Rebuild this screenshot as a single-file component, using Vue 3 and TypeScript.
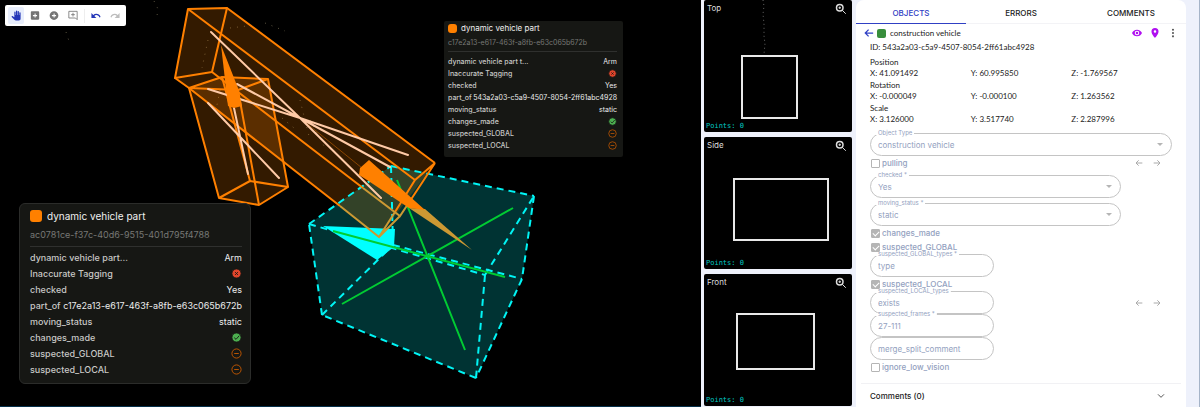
<script setup lang="ts">
import { ref } from 'vue'

type Mark = 'bad' | 'good' | 'none'
interface CardRow { name: string; value?: string; mark?: Mark }
interface Card { id: string; size: string; rows: CardRow[] }

const makeRows = (kind: string, partOf: string): CardRow[] => [
  { name: kind, value: 'Arm' },
  { name: 'Inaccurate Tagging', mark: 'bad' },
  { name: 'checked', value: 'Yes' },
  { name: 'part_of', value: partOf },
  { name: 'moving_status', value: 'static' },
  { name: 'changes_made', mark: 'good' },
  { name: 'suspected_GLOBAL', mark: 'none' },
  { name: 'suspected_LOCAL', mark: 'none' },
]

const cards: Card[] = [
  { id: 'c17e2a13-e617-463f-a8fb-e63c065b672b', size: 'small', rows: makeRows('dynamic vehicle part t...', '543a2a03-c5a9-4507-8054-2ff61abc4928') },
  { id: 'ac0781ce-f37c-40d6-9515-401d795f4788', size: 'large', rows: makeRows('dynamic vehicle part...', 'c17e2a13-e617-463f-a8fb-e63c065b672b') },
]

const views = [
  { name: 'Top', x: 38, y: 56, w: 55, h: 62 },
  { name: 'Side', x: 30, y: 42, w: 94, h: 61 },
  { name: 'Front', x: 33, y: 40, w: 77, h: 55 },
]

const tabs = ['OBJECTS', 'ERRORS', 'COMMENTS']
const active = ref('OBJECTS')

const transform = [
  { name: 'Position', values: ['X: 41.091492', 'Y: 60.995850', 'Z: -1.769567'] },
  { name: 'Rotation', values: ['X: -0.000049', 'Y: -0.000100', 'Z: 1.263562'] },
  { name: 'Scale', values: ['X: 3.126000', 'Y: 3.517740', 'Z: 2.287996'] },
]
</script>

<template>
  <div class="app">
    <main class="scene">
      <svg class="world" viewBox="0 0 701 407" preserveAspectRatio="xMinYMin meet" aria-hidden="true">
        <g class="dust">
          <path d="M154 1l4 8M157 14l2 5M66 32l4 12M208 40l-6 28M220 90l-5 25M230 28l25-3M265 23l20 8M300 100l10 40M310 120l14 26M282 118l12 10" />
        </g>
        <polygon class="cyan-fill" points="309,224 391,166 534,196 522,279 476,378 322,315" />
        <g class="orange-fill">
          <polygon points="188,9 227,8 435,163 379,237 175,78" />
          <polygon points="189,88 222,77 268,79 288,187 259,205 219,198" />
        </g>
        <g class="cyan-line">
          <path d="M309 224L391 166" /><path d="M391 166L534 196" /><path d="M534 196L522 279" />
          <path d="M522 279L476 378" /><path d="M476 378L322 315" /><path d="M322 315L309 224" />
          <path d="M309 224L485 275" /><path d="M393 245L522 279" /><path d="M391 166L393 245" />
          <path d="M322 315L393 245" /><path d="M485 275L534 196" /><path d="M485 275L476 378" />
        </g>
        <polygon class="cyan" points="323,226 395,229 394,247 377,260" />
        <path class="green-line" d="M342 304L513 208M465 350L397 180M333 231L505 277" />
        <g class="orange-line">
          <path d="M188 9L227 8L212 72L175 78Z" />
          <path d="M188 9L415 180M227 8L435 163M212 72L363 188M175 78L189 88L340 206" />
          <path d="M189 88L222 77L268 79L238 90ZM219 198L250 181L288 187L259 205Z" />
          <path d="M189 88L219 198M268 79L288 187M238 90L259 205M222 77L250 181" />
          <path d="M435 163L415 180L395 212M435 163L410 201" />
        </g>
        <path class="amber-line" d="M340 206L379 237L395 212M363 188L400 216L410 201M379 237L400 216" />
        <path class="thin-line" d="M300 118L362 168" />
        <g class="pink-line">
          <path d="M211 32L300 118L208 89M237 84L300 118M208 103L279 178M408 155L300 118L390 167M300 118L381 198M234 108L248 174" />
        </g>
        <polygon class="orange" points="221,45 238,88 242,106 234,108 228,106" />
        <polygon class="amber" points="409,208 472,250 425,209" />
        <polygon class="orange" points="369,160 360,168 359,175 367,180 409,208 425,210" />
      </svg>

      <div class="toolbar" role="toolbar" aria-label="Scene tools">
        <button class="tool selected" aria-label="Pan">
          <svg viewBox="0 0 24 24"><path d="M23 5.500V20c0 2.200-1.800 4-4 4h-7.300c-1.080 0-2.100-.43-2.850-1.190L1 14.830s1.260-1.230 1.300-1.250c.22-.19.49-.29.79-.29.22 0 .42.06.6.16L8 15.910V4c0-.83.67-1.500 1.500-1.500S11 3.170 11 4v7h1V1.500c0-.83.67-1.500 1.500-1.500S15 .67 15 1.500V11h1V2.500c0-.83.67-1.500 1.500-1.500s1.500.67 1.500 1.500V11h1V5.500c0-.83.67-1.500 1.500-1.500S23 4.670 23 5.500z" /></svg>
        </button>
        <button class="tool" aria-label="Add box">
          <svg viewBox="0 0 24 24"><path fill-rule="evenodd" d="M4 2h16a2 2 0 012 2v16a2 2 0 01-2 2H4a2 2 0 01-2-2V4a2 2 0 012-2zm7 5v4H7v2.500h4V17h2.500v-3.500H17V11h-3.500V7z" /></svg>
        </button>
        <button class="tool" aria-label="Add point">
          <svg viewBox="0 0 24 24"><path fill-rule="evenodd" d="M12 1.500a10.500 10.500 0 100 21 10.500 10.500 0 000-21zM11 7v4H7v2.500h4V17h2.500v-3.500H17V11h-3.500V7z" /></svg>
        </button>
        <button class="tool" aria-label="Add comment">
          <svg viewBox="0 0 24 24"><path class="stroke" d="M2 2h20v20l-4-4H2zM12 5.500v9M7.500 10h9" /></svg>
        </button>
        <span class="divider"></span>
        <button class="tool undo" aria-label="Undo">
          <svg viewBox="0 0 24 24"><path d="M12.500 8c-2.650 0-5.050.99-6.900 2.600L1 6v12h12l-5-5c1.300-1.200 2.700-2 4.500-2 3.540 0 6.550 2.310 7.600 5.500l2.900-.9C21.500 11 17.400 8 12.500 8z" /></svg>
        </button>
        <button class="tool redo" aria-label="Redo">
          <svg viewBox="0 0 24 24"><path d="M18.400 10.600C16.550 8.990 14.150 8 11.500 8 6.600 8 2.500 11 1 15.600l2.900.9c1.050-3.190 4.050-5.500 7.600-5.500 1.800 0 3.200.8 4.500 2l-5 5h12V6z" /></svg>
        </button>
      </div>

      <section v-for="card in cards" :key="card.id" class="card" :class="card.size">
        <h2><span class="swatch"></span>dynamic vehicle part</h2>
        <p class="card-id">{{ card.id }}</p>
        <dl>
          <div v-for="row in card.rows" :key="row.name">
            <dt>{{ row.name }}</dt>
            <dd>
              <template v-if="row.value">{{ row.value }}</template>
              <svg v-else viewBox="0 0 12 12" :class="row.mark">
                <circle cx="6" cy="6" r="5" />
                <path v-if="row.mark === 'bad'" d="M4.500 4.500l3 3M7.500 4.500l-3 3" />
                <path v-else-if="row.mark === 'good'" d="M3.500 6.200l2 1.800 3.500-4" />
                <path v-else d="M3.500 6h5" />
              </svg>
            </dd>
          </div>
        </dl>
      </section>
    </main>

    <div class="views">
      <section v-for="view in views" :key="view.name" class="view">
        <svg class="outline" viewBox="0 0 148 132" aria-hidden="true">
          <path v-if="view.name === 'Top'" class="trail" d="M59 0l1 6-1 8 1 10 0 12 1 8-1 10" />
          <rect :x="view.x" :y="view.y" :width="view.w" :height="view.h" />
        </svg>
        <header>
          <h3>{{ view.name }}</h3>
          <button :aria-label="`Zoom ${view.name}`">
            <svg viewBox="0 0 24 24"><circle cx="9.500" cy="9.500" r="6.500" /><path d="M14.500 14.500l7 7M9.500 7v5M7 9.500h5" /></svg>
          </button>
        </header>
        <p>Points: 0</p>
      </section>
    </div>

    <aside class="panel">
      <nav role="tablist">
        <button v-for="tab in tabs" :key="tab" role="tab" :aria-selected="tab === active" @click="active = tab">{{ tab }}</button>
      </nav>

      <div class="object">
        <button class="back" aria-label="Back"><svg viewBox="0 0 24 24"><path d="M22 12H3M11 4l-8 8 8 8" /></svg></button>
        <span class="swatch"></span>
        <h2>construction vehicle</h2>
        <button aria-label="Visibility">
          <svg viewBox="0 0 24 24"><path class="solid" fill-rule="evenodd" d="M12 4C6.500 4 2 7.300 0 12c2 4.700 6.500 8 12 8s10-3.300 12-8c-2-4.700-6.500-8-12-8zm0 13.500a5.500 5.500 0 110-11 5.500 5.500 0 010 11zM12 9a3 3 0 100 6 3 3 0 000-6z" /></svg>
        </button>
        <button aria-label="Locate">
          <svg viewBox="0 0 24 24"><path class="solid" fill-rule="evenodd" d="M12 0a8.500 8.500 0 00-8.500 8.500C3.500 15 12 24 12 24s8.500-9 8.500-15.500A8.500 8.500 0 0012 0zm0 11.500a3 3 0 110-6 3 3 0 010 6z" /></svg>
        </button>
        <button class="more" aria-label="More">
          <svg viewBox="0 0 24 24"><circle cx="12" cy="4" r="2.500" /><circle cx="12" cy="12" r="2.500" /><circle cx="12" cy="20" r="2.500" /></svg>
        </button>
      </div>

      <div class="facts">
        <p class="uuid">ID: 543a2a03-c5a9-4507-8054-2ff61abc4928</p>
        <template v-for="group in transform" :key="group.name">
          <h3>{{ group.name }}</h3>
          <div class="triple"><span v-for="value in group.values" :key="value">{{ value }}</span></div>
        </template>
      </div>

      <form @submit.prevent>
        <div class="field full">
          <label for="type">Object Type</label>
          <select id="type" disabled><option>construction vehicle</option></select>
        </div>
        <div class="line">
          <label class="check"><input type="checkbox" disabled /><span>pulling</span></label>
          <div class="steps">
            <button aria-label="Previous pulling change"><svg viewBox="0 0 24 24"><path d="M22 12H3M11 4l-8 8 8 8" /></svg></button>
            <button aria-label="Next pulling change"><svg viewBox="0 0 24 24"><path d="M2 12h19M13 4l8 8-8 8" /></svg></button>
          </div>
        </div>
        <div class="field wide spaced">
          <label for="checked">checked *</label>
          <select id="checked" disabled><option>Yes</option></select>
        </div>
        <div class="field wide spaced">
          <label for="moving">moving_status *</label>
          <select id="moving" disabled><option>static</option></select>
        </div>
        <div class="line"><label class="check"><input type="checkbox" checked disabled /><span>changes_made</span></label></div>
        <div class="line"><label class="check"><input type="checkbox" checked disabled /><span>suspected_GLOBAL</span></label></div>
        <div class="field">
          <label for="global">suspected_GLOBAL_types *</label>
          <input id="global" type="text" value="type" disabled />
        </div>
        <div class="line"><label class="check"><input type="checkbox" checked disabled /><span>suspected_LOCAL</span></label></div>
        <div class="line">
          <div class="field">
            <label for="local">suspected_LOCAL_types</label>
            <input id="local" type="text" value="exists" disabled />
          </div>
          <div class="steps">
            <button aria-label="Previous local change"><svg viewBox="0 0 24 24"><path d="M22 12H3M11 4l-8 8 8 8" /></svg></button>
            <button aria-label="Next local change"><svg viewBox="0 0 24 24"><path d="M2 12h19M13 4l8 8-8 8" /></svg></button>
          </div>
        </div>
        <div class="field">
          <label for="frames">suspected_frames *</label>
          <input id="frames" type="text" value="27-111" disabled />
        </div>
        <div class="field">
          <input type="text" placeholder="merge_split_comment" aria-label="merge_split_comment" disabled />
        </div>
        <div class="line"><label class="check"><input type="checkbox" disabled /><span>ignore_low_vision</span></label></div>
      </form>

      <button class="comments">
        Comments (0)
        <svg viewBox="0 0 24 24"><path d="M3 7l9 9 9-9" /></svg>
      </button>
    </aside>
  </div>
</template>

<style>
body { margin: 0; background: #eef1fb; }
</style>

<style scoped>
* { box-sizing: border-box; }
h2, h3, p, dl, dd { margin: 0; font-weight: 400; }
button { border: 0; padding: 0; background: none; font: inherit; color: inherit; display: block; }
svg { display: block; }

.app {
  display: grid;
  grid-template-columns: minmax(0, 1fr) 151px 330px;
  column-gap: 4px;
  min-height: 100vh;
  padding-right: 13px;
  border-right: 1px solid #a5b4c8;
  background: #eef1fb;
  font-family: Inter, "Liberation Sans", sans-serif;
}

.scene { position: relative; overflow: hidden; margin-right: -4px; background: #000; border-bottom: 1px solid #06304a; }
.world { width: 100%; position: absolute; inset: 0; }
.dust path { fill: none; stroke: #5b5540; stroke-width: 1; stroke-dasharray: 1 6; }
.cyan-fill { fill: #003333; }
.orange-fill polygon { fill: #ff8000; fill-opacity: 0.2; }
.cyan-line path { fill: none; stroke: #00f5f5; stroke-width: 2; stroke-dasharray: 7 5; }
.cyan { fill: #00ffff; }
.green-line { fill: none; stroke: #00cc33; stroke-width: 2; }
.orange-line path { fill: none; stroke: #ff8000; stroke-width: 2; stroke-linejoin: round; }
.amber-line { fill: none; stroke: #cc9933; stroke-width: 2; }
.thin-line { fill: none; stroke: #8a4500; stroke-width: 1; }
.pink-line path { fill: none; stroke: #ffcaa6; stroke-width: 2; stroke-linecap: round; }
.orange { fill: #ff8000; }
.amber { fill: #cc9933; }

.toolbar {
  position: absolute; left: 5px; top: 5px;
  display: flex; align-items: center; gap: 3px;
  padding: 2px 3px; border-radius: 2px; background: #fff;
}
.tool { width: 16px; height: 17px; padding: 3px; border-radius: 2px; }
.tool svg { width: 10px; height: 11px; fill: #757575; }
.tool .stroke { fill: none; stroke: #757575; stroke-width: 2; }
.tool.selected { background: #e8eefc; }
.tool.selected svg, .tool.undo svg { fill: #2436b8; }
.tool.redo svg { fill: #bdbdbd; }
.divider { width: 1px; height: 14px; background: #eee; }

.card { position: absolute; background: #161714; color: #c8c8c6; }
.card h2 { display: flex; align-items: center; color: #f0f0f0; }
.card .swatch { background: #ff8000; border-radius: 3px; }
.card-id { color: #777775; border-bottom: 1px solid #2f302e; }
.card dl > div { display: flex; justify-content: space-between; align-items: center; }
.card dt { font-weight: 500; }
.card dd { color: #ececec; }
.card svg { stroke-width: 1; fill: none; }
.card .bad { fill: #e0452c; stroke: #161714; }
.card .good { fill: #4caf50; stroke: #161714; }
.card .none { stroke: #c75a00; }

.small { left: 444px; top: 21px; width: 179px; padding: 0 6px 6px 4px; border-radius: 2px; font-size: 7px; }
.small h2 { height: 14px; gap: 4px; font-size: 8px; }
.small .swatch { width: 9px; height: 9px; }
.small .card-id { height: 17px; line-height: 16px; margin-bottom: 3px; font-size: 7px; }
.small dl > div { height: 12px; }
.small dd svg { width: 9px; height: 9px; }

.large { left: 19px; top: 203px; width: 232px; padding: 3px 8px 6px 10px; border: 1px solid #2b2c2a; border-radius: 6px; font-size: 9px; }
.large h2 { height: 18px; gap: 5px; font-size: 10px; }
.large .swatch { width: 12px; height: 12px; }
.large .card-id { height: 22px; line-height: 20px; margin-bottom: 2px; font-size: 9px; }
.large dl > div { height: 16px; }
.large dd svg { width: 11px; height: 11px; }

.views { display: flex; flex-direction: column; gap: 5px; padding: 0 0 1px 3px; }
.view { position: relative; flex: 1; display: flex; flex-direction: column; justify-content: space-between; background: #000; border-radius: 2px; }
.view header { display: flex; justify-content: space-between; padding: 3px 5px 0 3px; position: relative; }
.view h3 { font-size: 8px; line-height: 10px; color: #ddd; }
.view button svg { width: 12px; height: 12px; fill: none; stroke: #ddd; stroke-width: 3; }
.view button svg path { stroke-width: 2; }
.view p { position: relative; padding: 0 2px 1px; font: 7px/10px "DejaVu Sans Mono", monospace; color: #00c8c0; }
.outline { position: absolute; inset: 0; width: 100%; height: 100%; }
.outline rect { fill: none; stroke: #e8e8e8; stroke-width: 2; }
.outline .trail { fill: none; stroke: #666; stroke-width: 1; stroke-dasharray: 1 3; }

.panel { display: flex; flex-direction: column; background: #fff; border-radius: 8px 8px 0 0; color: #222; font-size: 8px; }
nav { display: grid; grid-template-columns: repeat(3, 1fr); }
nav button { height: 24px; padding-top: 2px; font-size: 8px; font-weight: 500; border-bottom: 1px solid #f3f3f6; color: #222; }
nav button[aria-selected="true"] { color: #3040c4; border-bottom-color: #3040c4; }

.object { display: flex; align-items: center; gap: 8px; height: 18px; padding: 0 8px; }
.object h2 { flex: 1; margin-left: -4px; font-family: Lato, Inter, sans-serif; font-size: 8px; }
.object .swatch { width: 9px; height: 9px; margin-left: -5px; border-radius: 2px; background: #388e3c; }
.object svg { width: 10px; height: 10px; fill: none; stroke: #3040c4; stroke-width: 3; }
.object .solid { fill: #b010f0; stroke: none; }
.object .more circle { fill: #555; stroke: none; }

.facts { padding: 0 14px; line-height: 11px; font-family: Lato, Inter, sans-serif; }
.uuid { margin-bottom: 4px; }
.facts h3 { font-size: 8px; }
.triple { display: grid; grid-template-columns: repeat(3, 1fr); margin-bottom: 1px; }

form { padding: 7px 14px 0; color: #93a1c0; }
.field { position: relative; width: 124px; height: 23px; border: 1px solid #c4c4c4; border-radius: 12px; }
.field.full { width: auto; }
.field.wide { width: 251px; }
.field.spaced { margin-top: 5px; }
.field label {
  position: absolute; left: 5px; top: -6px; padding: 0 2px;
  font-size: 6px; line-height: 10px; white-space: nowrap;
  background: linear-gradient(#fff, #fff) center / 100% 3px no-repeat;
}
.field input, .field select {
  display: block; width: 100%; height: 100%; padding: 0 7px; border: 0; background: none; appearance: none;
  font: 8px Inter, "Liberation Sans", sans-serif; color: #93a1c0; opacity: 1;
}
.field input::placeholder { color: #93a1c0; opacity: 1; }
.field:has(select)::after {
  content: ""; position: absolute; right: 8px; top: 9px;
  border: 3px solid transparent; border-top-color: #b5b5b5; border-bottom: 0;
}
.line { display: flex; justify-content: space-between; align-items: center; min-height: 14px; }
.check { display: flex; align-items: center; gap: 2px; padding-left: 1px; font-weight: 500; }
.check input { appearance: none; width: 9px; height: 9px; margin: 0; border: 1px solid #b5b5b5; border-radius: 1px; position: relative; }
.check input:checked { background: #b5b5b5; }
.check input:checked::after {
  content: ""; position: absolute; left: 2px; top: 0; width: 3px; height: 5px;
  border: solid #fff; border-width: 0 1px 1px 0; transform: rotate(45deg);
}
.steps { display: flex; gap: 10px; padding-right: 11px; }
.steps svg { width: 8px; height: 8px; fill: none; stroke: #aaa; stroke-width: 3; }

.comments {
  display: flex; justify-content: space-between; align-items: center; margin: auto 5px 0;
  height: 24px; padding: 0 16px 0 9px; border-top: 1px solid #f1f1f4; font-size: 8px; font-weight: 500;
}
.comments svg { width: 8px; height: 8px; fill: none; stroke: #555; stroke-width: 3; }
</style>
